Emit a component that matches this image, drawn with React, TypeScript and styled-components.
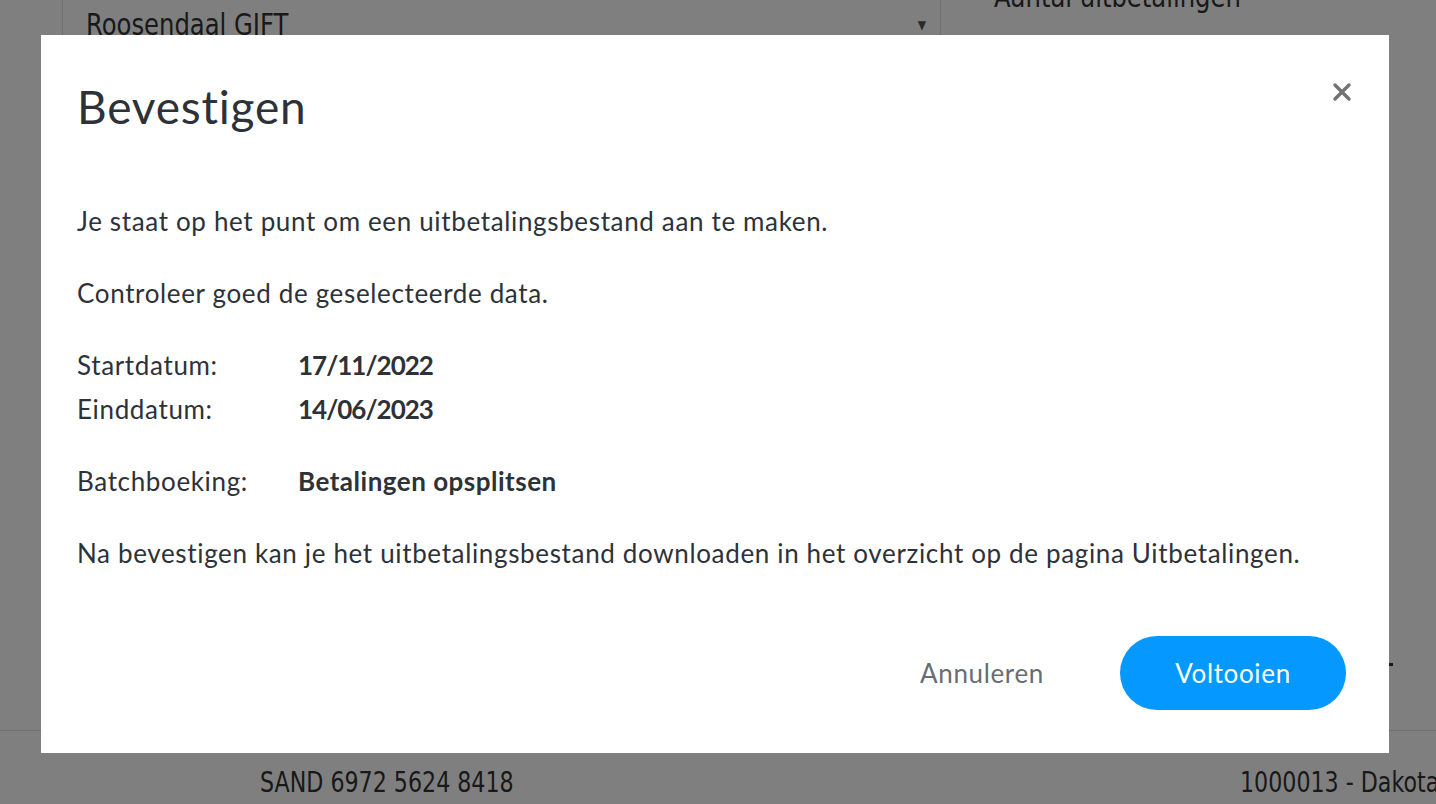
import React from 'react'
import styled, { createGlobalStyle } from 'styled-components'

const GlobalStyle = createGlobalStyle`
  html, body {
    margin: 0;
    padding: 0;
    background: #ffffff;
    font-family: Lato, "Noto Sans", sans-serif;
  }
  * { box-sizing: border-box; }
`

const App = () => {
  return (
    <>
      <GlobalStyle />
      <Page>
        <TopRow>
          <SelectCell>
            <CondensedText>Roosendaal GIFT</CondensedText>
            <Caret>▼</Caret>
          </SelectCell>
          <SideCell>
            <CondensedText>Aantal uitbetalingen</CondensedText>
          </SideCell>
        </TopRow>
        <Spacer />
        <TableRow>
          <Cell $width="1240px" $pad="260px">
            <CellText>SAND 6972 5624 8418</CellText>
          </Cell>
          <Cell $width="196px" $pad="0">
            <CellText>1000013 - Dakota</CellText>
          </Cell>
        </TableRow>
        <Dot />
      </Page>

      <Overlay>
        <Modal>
          <Close aria-label="Sluiten">
            <svg width="20" height="20" viewBox="0 0 20 20">
              <path d="M3 3 L17 17 M17 3 L3 17" stroke="#737373" strokeWidth="3.4" strokeLinecap="round" />
            </svg>
          </Close>
          <Title>Bevestigen</Title>
          <Body>
            <Text>Je staat op het punt om een uitbetalingsbestand aan te maken.</Text>
            <Text>Controleer goed de geselecteerde data.</Text>
            <Details>
              <DetailRow>
                <Label>Startdatum:</Label>
                <Value $spacing="-1px">17/11/2022</Value>
              </DetailRow>
              <DetailRow>
                <Label>Einddatum:</Label>
                <Value $spacing="-1px">14/06/2023</Value>
              </DetailRow>
            </Details>
            <DetailRow>
              <Label>Batchboeking:</Label>
              <Value $spacing="0.5px">Betalingen opsplitsen</Value>
            </DetailRow>
            <Text>Na bevestigen kan je het uitbetalingsbestand downloaden in het overzicht op de pagina Uitbetalingen.</Text>
          </Body>
          <Footer>
            <CancelButton>Annuleren</CancelButton>
            <PrimaryButton>Voltooien</PrimaryButton>
          </Footer>
        </Modal>
      </Overlay>
    </>
  )
}

export default App

const Page = styled.div`
  position: relative;
  width: 100%;
  height: 804px;
  overflow: hidden;
  display: flex;
  flex-direction: column;
  font-family: "DejaVu Sans", sans-serif;
  font-stretch: condensed;
  color: #333;
`

const TopRow = styled.div`
  display: flex;
  height: 90px;
  margin-top: -20px;
`

const SelectCell = styled.div`
  margin-left: 62px;
  width: 879px;
  border-left: 1px solid #dedede;
  border-right: 1px solid #dedede;
  display: flex;
  align-items: center;
  justify-content: space-between;
  padding: 0 14px 0 23px;
`

const CondensedText = styled.span`
  font-size: 30px;
  line-height: 34px;
  transform: scaleX(0.9);
  transform-origin: left;
  display: inline-block;
  white-space: nowrap;
`

const Caret = styled.span`
  font-size: 12px;
  color: #555;
`

const SideCell = styled.div`
  padding-left: 53px;
`

const Spacer = styled.div`
  flex: 1;
`

const TableRow = styled.div`
  display: flex;
  height: 74px;
  border-top: 1px solid #dedede;
  align-items: center;
  padding-top: 30px;
  white-space: nowrap;
`

const Cell = styled.div<{ $width: string; $pad: string }>`
  width: ${({ $width }) => $width};
  padding-left: ${({ $pad }) => $pad};
  flex-shrink: 0;
`

const CellText = styled.span`
  display: inline-block;
  font-size: 28px;
  transform: scaleX(0.88);
  transform-origin: left;
`

const Dot = styled.span`
  position: absolute;
  left: 1389px;
  top: 663px;
  width: 4px;
  height: 3px;
  background: #333;
`

const Overlay = styled.div`
  position: fixed;
  inset: 0;
  background: rgba(0, 0, 0, 0.5);
  display: flex;
  align-items: flex-start;
  padding: 35px 0 0 41px;
`

const Modal = styled.div`
  position: relative;
  width: 1348px;
  height: 718px;
  background: #ffffff;
  padding: 44px 43px 43px 36px;
  display: flex;
  flex-direction: column;
  color: #2d3238;
  font-family: Lato, "Noto Sans", sans-serif;
  letter-spacing: 0.65px;
`

const Close = styled.button`
  position: absolute;
  top: 47px;
  right: 37px;
  width: 20px;
  height: 20px;
  padding: 0;
  border: none;
  background: none;
  cursor: pointer;
  display: flex;
`

const Title = styled.h2`
  margin: 0;
  font-size: 46px;
  line-height: 56px;
  font-weight: 400;
  letter-spacing: 0.8px;
`

const Body = styled.div`
  margin-top: 64px;
  display: flex;
  flex-direction: column;
  gap: 28px;
`

const Text = styled.p`
  margin: 0;
  font-size: 26px;
  line-height: 44px;
`

const Details = styled.div`
  display: flex;
  flex-direction: column;
`

const DetailRow = styled.div`
  display: flex;
  font-size: 26px;
  line-height: 44px;
`

const Label = styled.span`
  width: 221px;
  flex-shrink: 0;
`

const Value = styled.span<{ $spacing: string }>`
  font-weight: 700;
  letter-spacing: ${({ $spacing }) => $spacing};
`

const Footer = styled.div`
  margin-top: auto;
  display: flex;
  justify-content: flex-end;
  align-items: center;
  gap: 52px;
`

const CancelButton = styled.button`
  border: none;
  background: none;
  font-family: inherit;
  letter-spacing: inherit;
  font-size: 26px;
  color: #686d74;
  padding: 0 24px;
  height: 74px;
  cursor: pointer;
`

const PrimaryButton = styled.button`
  border: none;
  width: 226px;
  height: 74px;
  border-radius: 37px;
  background: #0598fe;
  color: #ffffff;
  font-family: inherit;
  letter-spacing: inherit;
  font-size: 26px;
  cursor: pointer;
`
